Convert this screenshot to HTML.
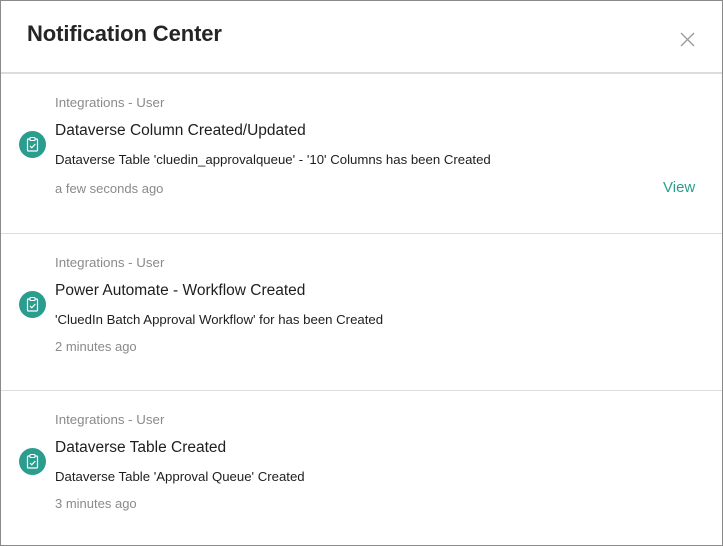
<!DOCTYPE html>
<html><head><style>
*{margin:0;padding:0;box-sizing:border-box}
body{width:723px;height:546px;background:#fff;font-family:"Segoe UI","Liberation Sans",sans-serif;position:relative;overflow:hidden}
.frame{position:absolute;left:0;top:0;width:723px;height:546px;border:1px solid #8a8a8a}
.t{position:absolute;white-space:nowrap}
h1{position:absolute;left:27px;top:21px;font-size:22px;font-weight:600;color:#252525;letter-spacing:-0.1px}
.hl{position:absolute;left:1px;right:1px;top:72px;height:2px;background:#dcdcdc}
.dl{position:absolute;left:1px;right:1px;height:1px;background:#dcdcdc}
.cat{font-size:13.3px;color:#8a8a8a}
.ti{font-size:15.5px;color:#1e1e1e}
.de{font-size:13.2px;color:#1e1e1e}
.tm{font-size:13px;color:#8a8a8a}
.ic{position:absolute;left:19px;width:27px;height:27px;border-radius:50%;background:#2a9d8f}
</style></head><body>
<div class="frame"></div>
<h1>Notification Center</h1>
<svg style="position:absolute;left:680px;top:32px" width="15" height="15" viewBox="0 0 15 15"><path d="M1 1L14 14M14 1L1 14" stroke="#999" stroke-width="1.3"/></svg>
<div class="hl"></div>

<div class="t cat" style="left:55px;top:95px">Integrations - User</div>
<div class="t ti" style="left:55px;top:122px">Dataverse Column Created/Updated</div>
<div class="t de" style="left:55px;top:152px">Dataverse Table 'cluedin_approvalqueue' - '10' Columns has been Created</div>
<div class="t tm" style="left:55px;top:181px">a few seconds ago</div>
<div class="t" style="left:663px;top:179px;font-size:15px;color:#2a9d8f">View</div>
<div class="ic" style="top:131px"></div>
<div class="dl" style="top:233px"></div>

<div class="t cat" style="left:55px;top:255px">Integrations - User</div>
<div class="t ti" style="left:55px;top:282px">Power Automate - Workflow Created</div>
<div class="t de" style="left:55px;top:312px">'CluedIn Batch Approval Workflow' for has been Created</div>
<div class="t tm" style="left:55px;top:339px">2 minutes ago</div>
<div class="ic" style="top:291px"></div>
<div class="dl" style="top:390px"></div>

<div class="t cat" style="left:55px;top:412px">Integrations - User</div>
<div class="t ti" style="left:55px;top:439px">Dataverse Table Created</div>
<div class="t de" style="left:55px;top:469px">Dataverse Table 'Approval Queue' Created</div>
<div class="t tm" style="left:55px;top:496px">3 minutes ago</div>
<div class="ic" style="top:448px"></div>

<svg width="0" height="0" style="position:absolute"><defs><g id="cb"><rect x="-5" y="-5" width="10" height="12" rx="1" fill="none" stroke="#fff" stroke-width="1.2"/><rect x="-2.5" y="-6.5" width="5" height="3" rx="0.8" fill="#2a9d8f" stroke="#fff" stroke-width="1.1"/><path d="M-2.5 2L-0.7 3.8L2.8 0" fill="none" stroke="#fff" stroke-width="1.2"/></g></defs></svg>
<svg style="position:absolute;left:19px;top:131px" width="27" height="27"><use href="#cb" x="13.5" y="13"/></svg>
<svg style="position:absolute;left:19px;top:291px" width="27" height="27"><use href="#cb" x="13.5" y="13"/></svg>
<svg style="position:absolute;left:19px;top:448px" width="27" height="27"><use href="#cb" x="13.5" y="13"/></svg>
</body></html>
